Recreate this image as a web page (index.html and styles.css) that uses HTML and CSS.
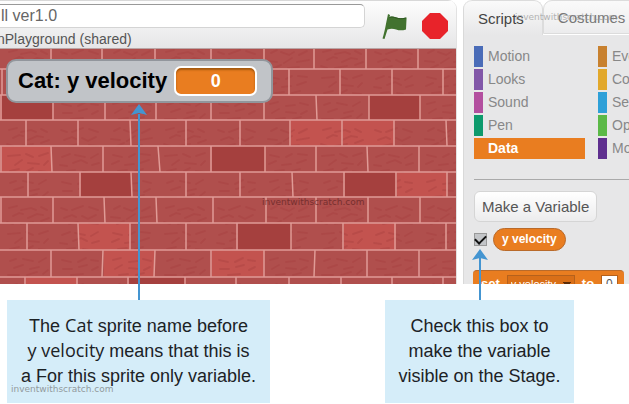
FILE: index.html
```html
<!DOCTYPE html>
<html lang="en">
<head>
<meta charset="utf-8">
<title>Variable monitor</title>
<link rel="stylesheet" href="styles.css">
</head>
<body>
<main class="figure">
  <div class="editor">
    <section class="stage-panel">
      <header class="stage-header">
        <div class="project">
          <input class="project-title" type="text" value="ll ver1.0" aria-label="Project title">
          <p class="project-owner">nPlayground (shared)</p>
        </div>
        <button class="icon-button" aria-label="Go">
          <svg class="flag" width="26" height="27" viewBox="0 0 26 27"><path d="M6 1l2 1-.4 2c5-2 7 3 17 0.500l-.6 12c-9 3-11-3-18.500 0L2.500 26 0.500 25.500C3 18 4 10 5 6z" fill="#42722f"/><path d="M7.500 4.500c5-2 7 3 16.500.5" fill="none" stroke="#2f5922"/></svg>
        </button>
        <button class="icon-button" aria-label="Stop">
          <svg width="26" height="26" viewBox="0 0 26 26"><path d="M8 0h10l8 8v10l-8 8H8l-8-8V8z" fill="#e8232a"/></svg>
        </button>
      </header>
      <div class="stage">
        <svg class="bricks" viewBox="0 0 456 235" preserveAspectRatio="xMinYMin slice" aria-hidden="true">
          <defs>
            <pattern id="grain" width="157" height="78" patternUnits="userSpaceOnUse" patternTransform="translate(3 -4)">
              <path d="M6 7l8-2M18 9l10-2 5 2M38 6l6 3M10 15l6-3 4 1M25 17l9-4 6 1M4 21l6 2M18 23l12-2M38 20l8-3M58 7l6 2M69 9l11-4M86 6l9 3M61 17l8-3 4 2M79 15l6 3 8-4M66 23l9-2M86 22l9 1M111 8l6-3M121 7l8 3 5-3M139 10l8-4M108 16l9 1M124 18l8-5M137 17l12-2M114 23l7-3M128 23l11-1M5 33l12-1M23 31l7 3M36 33l9-3M12 42l7-5M25 40l11 1M41 42l4-4M7 48l9-2M24 48l6-3M36 48l8 1M59 34l8-3M72 32l10 2M88 35l7-4M57 42l7 1M70 40l8-3 6 3M89 42l7-2M64 48l8-1M80 48l6 1M110 32l9 2M126 34l6-3M138 31l9 1M109 41l7-3M122 42l9-1M137 40l9-3M115 48l9-1M132 48l8-2M7 60l6-2M20 58l10 2M36 61l7-4M11 67l9-3M27 68l9-2M5 74l11 0M24 74l10-3M40 73l5-4M59 59l9 2M75 61l8-4M88 59l7 1M60 68l9 0M76 66l8-2M89 69l6-3M68 74l12-1M110 59l8-2M126 61l9-1M140 58l8 2M112 68l7-4M126 67l10 1M141 69l6-3M116 74l9-1M133 74l8-2"/>
            </pattern>
          </defs>
          <rect width="456" height="235" fill="#b04f4d"/>
          <path fill="#c3534f" d="M291 71h51v26h-51zM343 71h51v26h-51zM2 97h50v26H2zM397 123h50v25h-50zM79 174h51v27H79zM344 174h52v27h-52zM104 201h51v27h-51zM212 201h52v27h-52zM26 228h51v7H26z"/>
          <rect width="456" height="235" fill="url(#grain)"/>
          <path fill="#a5403e" d="M2 46h51v25H2zM369 46h51v25h-51zM212 97h53v26h-53zM81 123h51v25H81zM345 123h50v25h-50zM238 174h53v27h-53zM129 228h56v7h-56z"/>
          <path class="mortar" d="M0 20h456M0 46h456M0 71h456M0 97h456M0 123h456M0 148h456M0 174h456M0 201h456M0 228h456"/>
          <path class="mortar" d="M51 0v20M102 0v20M155 0v20M211 0v20M264 0v20M314 0v20M366 0v20M418 0v20M2 20v26M289 20v26M340 20v26M392 20v26M443 20v26M1 46v25M53 46v25M105 46v25M156 46v25M211 46v25M264 46v25M316 46l1 25M369 46v25M420 46v25M26 71v26M78 71v26M130 71l1 26M186 71v26M240 71v26M290 71v26M342 71v26M394 71v26M446 71l1 26M1 97v26M51 97l1 26M103 97v26M158 97l2 26M211 97v26M265 97v26M316 97v26M367 97l1 26M419 97v26M28 123v25M80 123v25M131 123l1 25M186 123v25M240 123v25M292 123l1 25M344 123v25M396 123v25M447 123v25M1 148v26M53 148v26M104 148l1 26M156 148l1 26M213 148v26M266 148v26M316 148v26M368 148v26M420 148v26M27 174v27M78 174l1 27M130 174v27M186 174v27M237 174v27M291 174v27M343 174v27M395 174v27M446 174v27M51 201v27M103 201l-1 27M155 201l-1 27M211 201v27M264 201v27M315 201l-1 27M367 201v27M419 201v27M25 228v7M77 228v7M128 228v7M185 228v7M236 228v7M289 228v7M341 228v7M392 228v7M443 228v7"/>
        </svg>
        <div class="monitor"><span>Cat: y velocity</span><output class="monitor-value">0</output></div>
        <span class="watermark on-stage">inventwithscratch.com</span>
      </div>
    </section>

    <section class="palette">
      <nav class="tabs">
        <button class="tab active">Scripts</button>
        <button class="tab">Costumes</button>
        <span class="watermark on-tabs">inventwithscratch.com</span>
      </nav>
      <div class="palette-body">
        <div class="categories">
          <button class="category motion">Motion</button>
          <button class="category events">Events</button>
          <button class="category looks">Looks</button>
          <button class="category control">Control</button>
          <button class="category sound">Sound</button>
          <button class="category sensing">Sensing</button>
          <button class="category pen">Pen</button>
          <button class="category operators">Operators</button>
          <button class="category data">Data</button>
          <button class="category more">More Blocks</button>
        </div>
        <div class="blocks">
          <button class="make">Make a Variable</button>
          <div class="variable">
            <input class="show" type="checkbox" id="show" checked>
            <label class="reporter" for="show">y velocity</label>
          </div>
          <div class="set-block">
            <label for="var">set</label>
            <select class="set-var" id="var"><option>y velocity</option></select>
            <label for="val">to</label>
            <input class="set-value" id="val" type="text" value="0">
          </div>
        </div>
      </div>
    </section>
  </div>

  <div class="notes">
    <p class="note">
      <svg class="arrow" width="18" height="196" viewBox="0 0 18 196" aria-hidden="true"><path d="M8 10h2v186H8z"/><path d="M9 0l8 11-8-2-8 2z"/></svg>
      The <span class="term">Cat</span> sprite name before<br><span class="term">y velocity</span> means that this is<br>a For this sprite only variable.
      <span class="watermark on-note">inventwithscratch.com</span>
    </p>
    <p class="note">
      <svg class="arrow" width="18" height="51" viewBox="0 0 18 51" aria-hidden="true"><path d="M8 9h2v42H8z"/><path d="M9 0l8 11-8-2-8 2z"/></svg>
      Check this box to<br>make the variable<br>visible on the Stage.
    </p>
  </div>
</main>
</body>
</html>
```
FILE: styles.css
```css
* { box-sizing: border-box; }
body { margin: 0; background: #fff; font-family: "Liberation Sans", Arial, sans-serif; color: #555; overflow: hidden; }
p { margin: 0; }
button { border: 0; padding: 0; background: none; color: inherit; font: inherit; }

.editor { display: grid; grid-template-columns: 457fr 166fr; gap: 6px; height: 284px; overflow: hidden; }

.stage-panel { display: flex; flex-direction: column; min-width: 0; border-right: 1px solid #e2e2e2; border-top-right-radius: 9px; overflow: hidden; }
.stage-header { display: flex; align-items: flex-start; gap: 14px; height: 48px; padding: 3px 8px 0 0; background: linear-gradient(#fdfdfd, #e6e6e7); border-top: 1px solid #d8d8d8; }
.project { flex: 1; }
.project-title { display: block; width: calc(100% - 3px); height: 24px; padding: 0 1px; border: 1px solid #d4d4d4; border-top: 1px solid #999; border-left: 0; border-radius: 0 5px 5px 0; background: #fff; font: 16px "Liberation Sans", Arial, sans-serif; color: #666; }
.project-owner { margin: 3px 0 0 -3px; font-size: 14px; line-height: 16px; }
.icon-button { display: block; padding-top: 9px; line-height: 0; }

.stage { position: relative; flex: 1; padding: 10px 0 0 6px; overflow: hidden; border-top: 1px solid #b9a6a6; }
.bricks { position: absolute; inset: 0; width: 100%; height: 100%; }
.bricks pattern path { fill: none; stroke: #a33c3d; stroke-width: 2; stroke-linecap: round; opacity: .35; }
.mortar { fill: none; stroke: #e09b96; stroke-width: 1.5; }
.monitor { position: relative; display: inline-flex; align-items: center; gap: 7px; height: 44px; padding: 0 14px 0 10px; border: 2px solid #92969c; border-radius: 10px; background: #c1c4c8; color: #000; font-size: 22px; font-weight: bold; }
.monitor-value { display: flex; align-items: center; justify-content: center; width: 83px; height: 30px; border: 2px solid #fff; border-radius: 7px; background: #e97d20; box-shadow: inset 0 2px 2px #a4590f; color: #fff; font-size: 18px; }

.palette { min-width: 0; overflow: hidden; background: #e7e7e8; border-left: 1px solid #d9d9d9; border-top-left-radius: 9px; }
.tabs { position: relative; display: flex; height: 35px; background: #fff; }
.tab { flex: none; height: 34px; padding: 0 14px; border: 1px solid #dcdcdc; border-radius: 9px 9px 0 0; background: linear-gradient(#fafafa, #ececed); font-size: 15px; color: #777; }
.tab.active { height: 35px; padding-right: 18px; border-bottom: 0; background: linear-gradient(#fafafa, #e7e7e8); color: #444; margin-left: -1px; }
.palette-body { padding: 11px 0 0 10px; }
.categories { display: grid; grid-template-columns: 111px 1fr; column-gap: 13px; row-gap: 2px; padding-bottom: 20px; border-bottom: 1px solid #aaa; }
.category { height: 21px; padding-left: 5px; border-left: 9px solid; text-align: left; white-space: nowrap; overflow: hidden; font-size: 14px; line-height: 21px; color: #888; }
.motion { border-color: #4a6cb8; }
.events { border-color: #c8812f; }
.looks { border-color: #8257a8; }
.control { border-color: #e2a82b; }
.sound { border-color: #b34f9f; }
.sensing { border-color: #2ea0d8; }
.pen { border-color: #0d9a6c; }
.operators { border-color: #5bb947; }
.data { border-color: #e97d20; background: #e97d20; color: #fff; font-weight: bold; }
.more { border-color: #5f2f8f; }

.make { display: block; height: 31px; margin-top: 11px; padding: 0 7px; border: 1px solid #d5d5d5; border-radius: 6px; background: linear-gradient(#fff, #ececed); font-size: 15px; color: #555; white-space: nowrap; }
.variable { display: flex; align-items: center; gap: 6px; margin-top: 6px; }
.show { appearance: none; width: 13px; height: 13px; margin: 0; border: 1px solid #999; background: #c3c5c8; display: grid; place-items: center; }
.show:checked::before { content: ""; width: 9px; height: 5px; margin-bottom: 3px; border: solid #111; border-width: 0 0 2px 2px; rotate: -45deg; }
.reporter { height: 23px; padding: 0 8px; border: 1px solid #b96a2a; border-radius: 12px; background: #e97d20; color: #fff; font-size: 12px; font-weight: bold; line-height: 21px; }
.set-block { display: inline-flex; align-items: center; gap: 7px; height: 28px; margin-top: 19px; margin-left: -1px; padding: 0 6px 2px 8px; border-top: 1px solid #b96a2a; border-radius: 4px; background: #e97d20; color: #fff; font-size: 13px; font-weight: bold; }
.set-var { appearance: none; width: 68px; height: 18px; padding: 0 3px; border: 1px solid #b5611c; border-radius: 0; background: linear-gradient(45deg, transparent 50%, #5d2c08 50%) right 7px center / 4px 4px no-repeat, linear-gradient(-45deg, transparent 50%, #5d2c08 50%) right 3px center / 4px 4px no-repeat, #d96f18; color: #fff; font: 11px "Liberation Sans", Arial, sans-serif; }
.set-value { width: 17px; height: 18px; padding: 0 4px; border: 1px solid #b5611c; background: #fff; color: #555; font: 12px "Liberation Sans", Arial, sans-serif; }

.notes { display: grid; grid-template-columns: 263px 189px; gap: 115px; padding: 16px 0 0 7px; }
.note { position: relative; padding: 14px 0; background: #d5edf9; color: #1c2226; font: 18px/25px "Liberation Sans", sans-serif; text-align: center; white-space: nowrap; }
.term { font-family: "Open Sans", sans-serif; line-height: 20px; }
.arrow { position: absolute; bottom: 100%; left: calc(50% - 9px); fill: #4495d1; }

.watermark { position: absolute; font: 9px/10px "DejaVu Sans", sans-serif; white-space: nowrap; color: #777; opacity: .7; }
.on-stage { left: 262px; top: 148px; color: #5e2222; }
.on-tabs { left: 51px; top: 12px; color: #999; }
.on-note { left: 4px; bottom: 9px; }
```
